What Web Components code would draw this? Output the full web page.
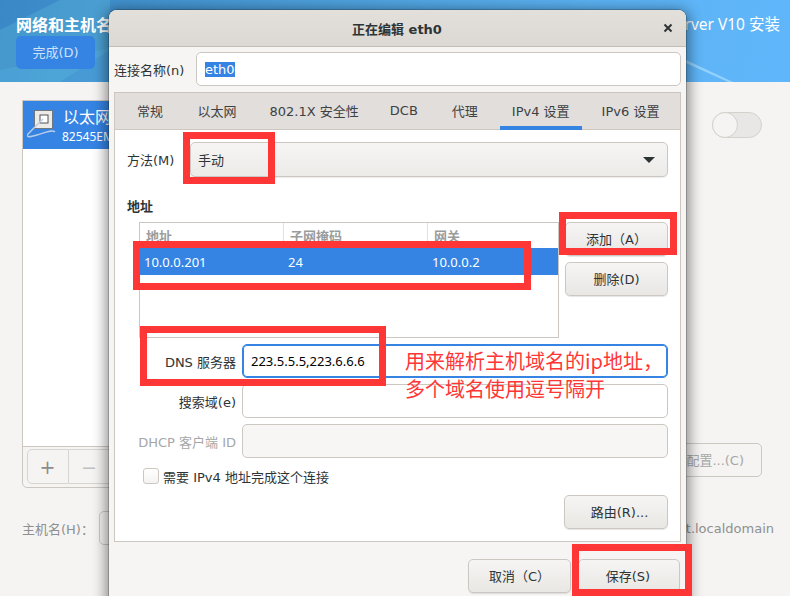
<!DOCTYPE html>
<html>
<head>
<meta charset="utf-8">
<style>
html, body { margin: 0; padding: 0; height: 596px; overflow: hidden; }
body { font: 13px "DejaVu Sans", "Noto Sans CJK SC", sans-serif; color: #2e3436; background: #f5f4f2; }
</style>
</head>
<body>
<install-page></install-page>

<script>
const SANS = `"Noto Sans", "Noto Sans CJK SC", sans-serif`;

class GtkButton extends HTMLElement {
    constructor() {
        super();
        this.attachShadow({mode: "open"}).innerHTML = `
        <style>
        :host {
            display: flex;
            align-items: center;
            justify-content: center;
            box-sizing: border-box;
            height: 34px;
            padding-bottom: 2px;
            border: 1px solid #cdc7c2;
            border-radius: 5px;
            background: linear-gradient(#f6f5f4, #e9e7e4);
            box-shadow: 0 1px 1px rgba(0,0,0,.1);
            font-size: 13px;
            color: #2e3436;
            white-space: pre;
        }
        :host([dim]) { background: #f5f4f2; box-shadow: none; color: #a5a7a7; }
        </style>
        <slot></slot>`;
    }
}
customElements.define("gtk-button", GtkButton);

class GtkEntry extends HTMLElement {
    constructor() {
        super();
        this.attachShadow({mode: "open"}).innerHTML = `
        <style>
        :host {
            display: flex;
            align-items: center;
            box-sizing: border-box;
            height: 34px;
            padding: 0 8px;
            border: 1px solid #cdc7c2;
            border-radius: 5px;
            background: #fff;
            color: #000;
            white-space: pre;
        }
        :host([focus]) { border-color: #3584e4; box-shadow: inset 0 0 0 1px #3584e4; }
        :host([off]) { background: #f7f6f4; }
        </style>
        <slot></slot>`;
    }
}
customElements.define("gtk-entry", GtkEntry);

class BgPanel extends HTMLElement {
    constructor() {
        super();
        this.attachShadow({mode: "open"}).innerHTML = `
        <style>
        * { box-sizing: border-box; }
        :host { display: block; box-sizing: border-box; height: 514px; background: #f5f4f2; padding: 18px 28px 0 22px; color: #8e9090; }
        .top { display: flex; height: 388px; }
        .side { width: 300px; height: 388px; display: flex; flex-direction: column; border: 1px solid #cdc7c2; border-radius: 0 0 5px 5px; }
        .list { flex: 1; background: #fff; }
        .sel { height: 48px; background: #3584e4; color: #fff; display: flex; padding: 7px 0 0 4px; gap: 4px; }
        .sel b { display: block; font-weight: 400; font-size: 16px; line-height: 18px; margin-top: -1px; font-family: "Noto Sans CJK SC", sans-serif; }
        .sel small { display: block; font: 12px ${SANS}; line-height: 16px; margin-top: 4px; margin-left: -1px; }
        .tools { height: 41px; padding: 2px 4px; border-top: 1px solid #cdc7c2; display: flex; }
        .tool { width: 42px; height: 35px; border: 1px solid #d8d4d0; display: flex; align-items: center; justify-content: center; font-size: 19px; padding-right: 1px; }
        .tool.a { border-radius: 5px 0 0 5px; color: #8c8c8c; }
        .tool.b { border-left: 0; color: #c0c0c0; }
        .right { flex: 1; display: flex; flex-direction: column; align-items: flex-end; justify-content: space-between; padding: 12px 0 11px; }
        .switch { width: 50px; height: 26px; border: 1px solid #d5d2ce; border-radius: 13px; background: #e8e7e5; }
        .switch i { display: block; width: 26px; height: 26px; margin: -1px; border: 1px solid #d5d2ce; border-radius: 13px; background: #f5f4f2; }
        gtk-button { width: 120px; justify-content: flex-end; padding-right: 17px; }
        .host { display: flex; align-items: center; height: 34px; margin-top: 23px; margin-right: -12px; }
        .host span { width: 77px; white-space: pre; }
        .host gtk-entry { width: 300px; background: #f5f4f2; }
        .host em { flex: 1; text-align: right; font-style: normal; }
        </style>
        <div class="top">
            <div class="side">
                <div class="list">
                    <div class="sel">
                        <svg width="32" height="32" viewBox="0 0 32 32">
                            <rect x="7.5" y="2.5" width="18" height="18" fill="#ecebe8" stroke="#6f7780"/>
                            <rect x="13" y="7" width="8" height="8" fill="#fff" stroke="#555"/>
                            <path d="M16 11 L1 26 C-1 30 3 29 10 27 C18 25 25 21 28 24" fill="none" stroke="#b9cce6" stroke-width="1.4"/>
                        </svg>
                        <div><b>以太网</b><small>82545EM</small></div>
                    </div>
                </div>
                <div class="tools"><div class="tool a">+</div><div class="tool b">−</div></div>
            </div>
            <div class="right">
                <div class="switch"><i></i></div>
                <gtk-button dim>配置...(C)</gtk-button>
            </div>
        </div>
        <div class="host">
            <span>主机名(H)：</span>
            <gtk-entry></gtk-entry>
            <em>t.localdomain</em>
        </div>`;
    }
}
customElements.define("bg-panel", BgPanel);

class TopBanner extends HTMLElement {
    constructor() {
        super();
        this.attachShadow({mode: "open"}).innerHTML = `
        <style>
        * { box-sizing: border-box; }
        :host {
            display: flex;
            position: relative;
            box-sizing: border-box;
            justify-content: space-between;
            height: 82px;
            padding: 13px 10px 0 16px;
            color: #fff;
            background: linear-gradient(100deg, #3a88c6 0%, #4da0dc 40%, #5cb3f4 75%, #60b6fa 100%);
        }
        svg { position: absolute; left: 0; top: 0; }
        div { position: relative; }
        h1 { margin: 0; font-size: 16px; line-height: 22px; font-weight: 700; font-family: "Noto Sans CJK SC", sans-serif; }
        gtk-button { width: 79px; height: 33px; margin-top: 1px; background: #3584e4; border: 0; box-shadow: none; color: #cfe2f8; }
        .brand { font: 15.5px/22px ${SANS}; }
        </style>
        <svg width="790" height="82">
            <path d="M0 30 L60 0 L110 0 L110 50 L60 82 L0 82Z" fill="#6fd0e0" opacity=".22"/>
            <path d="M0 70 L110 48 L110 82 L0 82Z" fill="#58b6e8" opacity=".3"/>
            <path d="M686 60 L733 82 L728 82 L686 63Z" fill="#bdeaff" opacity=".55"/>
        </svg>
        <div>
            <h1>网络和主机名</h1>
            <gtk-button>完成(D)</gtk-button>
        </div>
        <div class="brand">Server V10 安装</div>`;
    }
}
customElements.define("top-banner", TopBanner);

class RedBox extends HTMLElement {
    constructor() {
        super();
        this.attachShadow({mode: "open"}).innerHTML = `
        <style>
        :host {
            display: block;
            position: absolute;
            box-sizing: border-box;
            border: 7px solid #ff3636;
            left: var(--x); top: var(--y); width: var(--w); height: var(--h);
        }
        </style>`;
    }
}
customElements.define("red-box", RedBox);

class EditDialog extends HTMLElement {
    constructor() {
        super();
        this.attachShadow({mode: "open"}).innerHTML = `
        <style>
        * { box-sizing: border-box; }
        :host {
            display: flex;
            flex-direction: column;
            position: absolute;
            left: 109px; top: 10px;
            width: 577px; height: 600px;
            background: #f6f5f4;
            border-radius: 8px 8px 0 0;
            box-shadow: 0 0 0 1px rgba(0,0,0,.18), 0 3px 14px 3px rgba(0,0,0,.45);
            font-family: "DejaVu Sans", "Noto Sans CJK SC", sans-serif;
        }
        .title { height: 37px; flex: none; display: flex; align-items: center; justify-content: center; position: relative;
            background: linear-gradient(#e3e0dc, #dcd9d4); border-bottom: 1px solid #c2bdb7; border-radius: 8px 8px 0 0; font-weight: 700; font-size: 13px; color: #2e3436; padding-right: 1px; }
        .close { position: absolute; right: 13px; top: 13px; }
        .name { display: flex; align-items: center; margin: 5px 5px 0; height: 34px; }
        .name label { width: 82px; }
        .name gtk-entry { flex: 1; }
        .hl { background: #3584e4; color: #fff; }
        .book { margin: 6px 5px 0; height: 450px; border: 1px solid #cdc7c2; background: #fff; display: flex; flex-direction: column; }
        .tabs { height: 37px; flex: none; display: flex; gap: 9px; padding-left: 10px; background: #e1dedb; border-bottom: 1px solid #cdc7c2; color: #3d4143; }
        .tabs span { padding: 1px 12px 0; display: flex; align-items: center; height: 37px; white-space: pre; border-bottom: 4px solid transparent; }
        .tabs span:nth-child(2) { margin-left: 1.5px; }
        .tabs span:nth-child(4) { margin-left: -2px; }
        .tabs span:nth-child(5) { margin-left: 1px; }
        .tabs span:nth-child(6) { margin-left: 1px; }
        .tabs span:nth-child(7) { margin-left: -1px; }
        .tabs .on { border-bottom-color: #3584e4; }
        .pane { padding: 12px 12px 0; flex: 1; }
        .method { display: flex; align-items: center; height: 35px; }
        .method label { width: 63px; }
        .combo { flex: 1; height: 35px; border: 1px solid #cdc7c2; border-radius: 5px; background: linear-gradient(#f6f5f4, #ecebe8); box-shadow: 0 1px 1px rgba(0,0,0,.08);
            display: flex; align-items: center; justify-content: space-between; padding: 0 12px 0 7px; font-family: ${SANS}; }
        .combo i { border: 6px solid transparent; border-top: 6px solid #2e3436; border-bottom: 0; }
        h3 { margin: 20px 0 5px; font-size: 13px; line-height: 20px; font-weight: 700; }
        .addr { display: flex; gap: 6px; margin-left: 12px; height: 116px; }
        .table { width: 420px; border: 1px solid #cdc7c2; background: #fff; }
        .thead, .row { display: grid; grid-template-columns: 144px 144px 1fr; }
        .thead { height: 25px; color: #9a9c9c; font-weight: 700; grid-template-columns: 143px 144px 1fr; }
        .thead span { padding: 3px 6px 0; border-left: 1px solid #e3e1de; }
        .thead span:first-child { border-left: 0; }
        .row { height: 27px; background: #3584e4; color: #fff; align-items: center; font-family: ${SANS}; }
        .row span { padding-left: 4px; }
        .btns { width: 103px; display: flex; flex-direction: column; gap: 6px; }
        .form { display: grid; grid-template-columns: 109px 1fr; column-gap: 6px; row-gap: 6px; margin-top: 6px; align-items: center; }
        .form label { text-align: right; white-space: pre; }
        .form .off { color: #a5a7a7; }
        .form gtk-entry { font-family: ${SANS}; }
        .check { display: flex; align-items: center; gap: 4px; margin: 10px 0 0 16px; height: 16px; }
        .check i { width: 16px; height: 16px; border: 1px solid #cdc7c2; border-radius: 3px; background: linear-gradient(#fff, #f4f3f1); }
        .route { display: flex; justify-content: flex-end; margin-top: 11px; }
        .route gtk-button { width: 104px; padding-left: 7px; }
        .actions { display: flex; justify-content: flex-end; gap: 7px; margin: 17px 6px 0 0; }
        .actions gtk-button { width: 103px; }
        .actions gtk-button:last-child { width: 102px; padding-right: 2px; }
        </style>
        <div class="title">正在编辑 eth0
            <svg class="close" width="10" height="10" viewBox="0 0 10 10"><path d="M1.5 1.5 L8.5 8.5 M8.5 1.5 L1.5 8.5" stroke="#2e3436" stroke-width="2"/></svg>
        </div>
        <div class="name"><label>连接名称(n)</label><gtk-entry><span class="hl">eth0</span></gtk-entry></div>
        <div class="book">
            <div class="tabs">
                <span>常规</span><span>以太网</span><span>802.1X 安全性</span><span>DCB</span><span>代理</span><span class="on">IPv4 设置</span><span>IPv6 设置</span>
            </div>
            <div class="pane">
                <div class="method"><label>方法(M)</label><div class="combo"><span>手动</span><i></i></div></div>
                <h3>地址</h3>
                <div class="addr">
                    <div class="table">
                        <div class="thead"><span>地址</span><span>子网掩码</span><span>网关</span></div>
                        <div class="row"><span>10.0.0.201</span><span>24</span><span>10.0.0.2</span></div>
                    </div>
                    <div class="btns"><gtk-button>添加（A）</gtk-button><gtk-button>删除(D)</gtk-button></div>
                </div>
                <div class="form">
                    <label>DNS 服务器</label><gtk-entry focus>223.5.5.5,223.6.6.6</gtk-entry>
                    <label>搜索域(e)</label><gtk-entry></gtk-entry>
                    <label class="off">DHCP 客户端 ID</label><gtk-entry off></gtk-entry>
                </div>
                <div class="check"><i></i><span>需要 IPv4 地址完成这个连接</span></div>
                <div class="route"><gtk-button>路由(R)...</gtk-button></div>
            </div>
        </div>
        <div class="actions"><gtk-button>取消（C）</gtk-button><gtk-button>保存(S)</gtk-button></div>`;
    }
}
customElements.define("edit-dialog", EditDialog);

class InstallPage extends HTMLElement {
    constructor() {
        super();
        this.attachShadow({mode: "open"}).innerHTML = `
        <style>
        :host { display: block; position: relative; width: 790px; height: 596px; overflow: hidden; }
        .note { position: absolute; left: 405px; top: 347px; font: 20px/27.5px "Noto Sans CJK SC", sans-serif; color: #ff3636; white-space: pre; }
        </style>
        <top-banner></top-banner>
        <bg-panel></bg-panel>
        <edit-dialog></edit-dialog>
        <red-box style="--x:183px;--y:132px;--w:92px;--h:52px"></red-box>
        <red-box style="--x:559px;--y:212px;--w:118px;--h:43px"></red-box>
        <red-box style="--x:133px;--y:241px;--w:398px;--h:49px"></red-box>
        <red-box style="--x:140px;--y:326px;--w:246px;--h:60px"></red-box>
        <red-box style="--x:572px;--y:544px;--w:120px;--h:52px"></red-box>
        <div class="note">用来解析主机域名的ip地址，
多个域名使用逗号隔开</div>`;
    }
}
customElements.define("install-page", InstallPage);
</script>
</body>
</html>
